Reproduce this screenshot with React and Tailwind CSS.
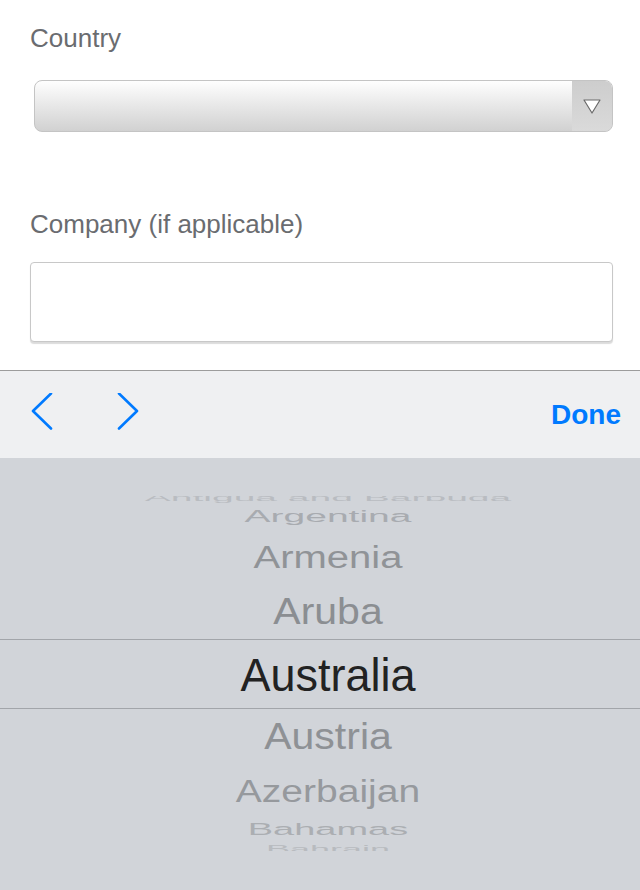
import { useState } from 'react'

const ROWS = [
  { name: 'Antigua and Barbuda', h: 'h-[12px]', text: 'text-[39px] scale-y-[0.25] text-[#b9bcc1]' },
  { name: 'Argentina', h: 'h-[27px]', text: 'text-[39px] scale-y-[0.42] text-[#a8abb0]' },
  { name: 'Armenia', h: 'h-[54px]', text: 'text-[40px] scale-y-[0.78] text-[#909397]' },
  { name: 'Aruba', h: 'h-[55px]', text: 'text-[41px] scale-y-[0.92] text-[#8b8e92]' },
  { name: 'Australia', h: 'h-[70px]', text: 'text-[45px] scale-y-[1.04] text-[#222222]', selected: true },
  { name: 'Austria', h: 'h-[55px]', text: 'text-[41px] scale-y-[0.91] text-[#8e9195]' },
  { name: 'Azerbaijan', h: 'h-[54px]', text: 'text-[39px] scale-y-[0.78] text-[#96999d]' },
  { name: 'Bahamas', h: 'h-[22px]', text: 'text-[38px] scale-y-[0.45] text-[#abaeb2]' },
  { name: 'Bahrain', h: 'h-[18px]', text: 'text-[36px] scale-y-[0.3] text-[#b8bbbf]' },
]

function Chevron({ dir }) {
  const d = dir === 'left' ? 'M21 0.5 L3 18 L21 35.5' : 'M3 0.5 L21 18 L3 35.5'
  return (
    <svg width="24" height="40" viewBox="0 0 24 40" fill="none">
      <path d={d} stroke="#007aff" strokeWidth="2.6" strokeLinecap="round" strokeLinejoin="round" />
    </svg>
  )
}

export default function App() {
  const [company, setCompany] = useState('')

  return (
    <div className="w-[640px] h-[890px] bg-white flex flex-col overflow-hidden font-[family-name:Liberation_Sans,Arial,sans-serif]">
      {/* form */}
      <div className="h-[370px] px-[30px] pt-[23px] flex flex-col">
        <label className="text-[26px] leading-[30px] text-[#6a6c70]">Country</label>
        <div className="mt-[27px] ml-[4px] w-[579px] h-[52px] rounded-[8px] border border-[#c4c4c4] bg-gradient-to-b from-[#fefefe] to-[#d1d1d1] flex overflow-hidden">
          <div className="flex-1" />
          <div className="w-[40px] bg-gradient-to-b from-[#cdcdcd] to-[#dadada] flex items-center justify-center">
            <svg width="20" height="18" viewBox="0 0 20 18">
              <polygon points="2,3 18,3 10,16" fill="#ffffff" stroke="#6a6a6a" strokeWidth="1.2" strokeLinejoin="round" />
            </svg>
          </div>
        </div>

        <label className="mt-[77px] text-[26px] leading-[30px] text-[#6a6c70]">Company (if applicable)</label>
        <input
          className="mt-[23px] w-[583px] h-[80px] rounded-[4px] border-[1.5px] border-[#c8c8c8] bg-white shadow-[0_2px_1px_rgba(0,0,0,0.14)] outline-none px-3 text-[26px]"
          value={company}
          onChange={e => setCompany(e.target.value)}
        />
      </div>

      {/* keyboard toolbar */}
      <div className="h-[88px] border-t border-[#9c9c9c] bg-[#eff0f2] flex items-center pl-[30px] pr-[19px]">
        <button className="-mt-[4px]"><Chevron dir="left" /></button>
        <button className="-mt-[4px] ml-[62px]"><Chevron dir="right" /></button>
        <button className="ml-auto text-[28px] leading-none font-bold text-[#007aff]">Done</button>
      </div>

      {/* picker wheel */}
      <div className="h-[432px] bg-[#d1d4d9] pt-[38px]">
        <div className="h-[355px] overflow-hidden">
          <div className="-mt-[5px] flex flex-col">
            {ROWS.map(r => (
              <div
                key={r.name}
                className={`${r.h} pl-[16px] flex items-center justify-center ${r.selected ? 'border-y border-[#a2a5aa]' : ''}`}
              >
                <span className={`${r.text} leading-none whitespace-nowrap`}>{r.name}</span>
              </div>
            ))}
          </div>
        </div>
      </div>
    </div>
  )
}
